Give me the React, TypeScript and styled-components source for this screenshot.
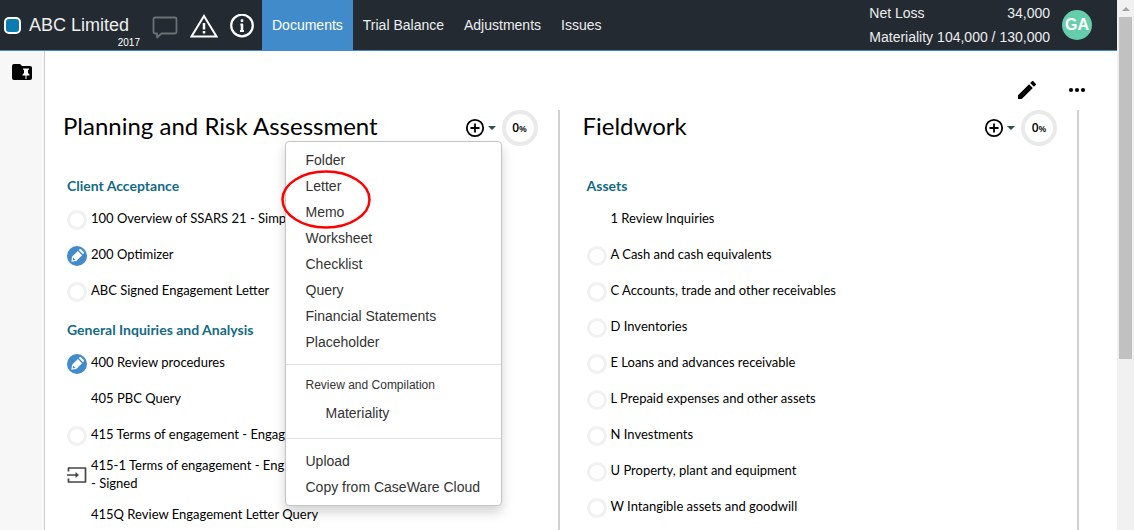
import React from 'react';
import styled, { createGlobalStyle } from 'styled-components';

const GlobalStyle = createGlobalStyle`
  *, *::before, *::after { box-sizing: border-box; }
  body {
    margin: 0;
    background: #fff;
    color: #000;
    font-family: "Liberation Sans", Arial, sans-serif;
    font-size: 14px;
    line-height: 20px;
    overflow: hidden;
  }
  h1, h2, h3, ul, dl, dd, dt, p { margin: 0; padding: 0; }
  ul { list-style: none; }
  a { color: inherit; text-decoration: none; }
  button { font: inherit; color: inherit; background: none; border: 0; padding: 0; cursor: pointer; }
  svg { display: block; }
`;

const Page = styled.div`
  display: flex;
  height: 100vh;
  overflow: hidden;
`;

const Main = styled.div`
  flex: 1;
  min-width: 0;
  display: flex;
  flex-direction: column;
`;

const Header = styled.header`
  display: flex;
  align-items: stretch;
  height: 51px;
  flex-shrink: 0;
  background: #232a32;
  color: #eee;
  border-bottom: 1px solid #428bca;
`;

const Brand = styled.div`
  display: flex;
  align-items: center;
  gap: 8px;
  padding-left: 4px;
`;

const BrandMark = styled.span`
  width: 17px;
  height: 17px;
  border: 2px solid #fff;
  border-radius: 5px;
  background: #0a7cb0;
`;

const BrandText = styled.div`
  display: flex;
  flex-direction: column;
  width: 111px;
  padding-top: 14px;
`;

const BrandName = styled.h1`
  font-size: 18px;
  line-height: 22px;
  font-weight: 400;
  white-space: nowrap;
`;

const BrandYear = styled.span`
  align-self: flex-end;
  font-size: 10px;
  line-height: 14px;
  color: #fff;
`;

const HeaderIcons = styled.div`
  display: flex;
  align-items: center;
  gap: 12px;
  padding: 2px 8px 0 12px;
`;

const HeaderIcon = styled.button`
  display: flex;
`;

const Nav = styled.nav`
  display: flex;
`;

const NavLink = styled.a<{ $active?: boolean }>`
  display: flex;
  align-items: center;
  padding: 0 10px;
  color: ${(p) => (p.$active ? '#fff' : '#eee')};
  background: ${(p) => (p.$active ? '#428bca' : 'transparent')};
`;

const Totals = styled.dl`
  display: grid;
  grid-template-columns: auto auto;
  align-content: center;
  column-gap: 4px;
  margin-left: auto;
  line-height: 24px;

  dd { text-align: right; }
`;

const Avatar = styled.button`
  align-self: center;
  width: 30px;
  height: 30px;
  margin: 0 25px 0 12px;
  border-radius: 50%;
  background: #66cdaa;
  color: #fff;
  font-size: 16px;
  font-weight: 700;
`;

const Body = styled.div`
  flex: 1;
  min-height: 0;
  display: flex;
`;

const Sidebar = styled.aside`
  width: 45px;
  flex-shrink: 0;
  display: flex;
  flex-direction: column;
  align-items: center;
  padding-top: 13px;
  background: #f7f7f7;
  border-right: 1px solid #ccc;
`;

const Content = styled.main`
  flex: 1;
  min-width: 0;
  display: flex;
  flex-direction: column;
`;

const Toolbar = styled.div`
  display: flex;
  justify-content: flex-end;
  align-items: center;
  gap: 32px;
  height: 59px;
  flex-shrink: 0;
  padding: 18px 31px 0 0;
`;

const Columns = styled.div`
  flex: 1;
  display: grid;
  grid-template-columns: repeat(2, minmax(0, 1fr));
  column-gap: 5px;
  padding-right: 38px;
  font-family: Lato, "Open Sans", sans-serif;
`;

const Column = styled.section`
  border-right: 2px solid #d0d0d0;
`;

const ColumnHead = styled.div`
  display: flex;
  align-items: center;
  height: 36px;
  margin-bottom: 19px;
  padding: 0 20px 0 18px;
`;

const ColumnTitle = styled.h2`
  flex: 1;
  padding-bottom: 4px;
  font-size: 24px;
  line-height: 32px;
  font-weight: 400;
`;

const AddWrap = styled.div`
  position: relative;
`;

const AddButton = styled.button`
  display: flex;
  align-items: center;
  gap: 3px;
  padding-right: 6px;
`;

const Progress = styled.span`
  display: flex;
  align-items: center;
  justify-content: center;
  width: 36px;
  height: 36px;
  border: 4px solid #eaeaea;
  border-radius: 50%;
  font-family: "Open Sans", sans-serif;
  font-size: 12px;
  font-weight: 600;

  small { font-size: 9px; padding-top: 2px; }
`;

const GroupTitle = styled.h3`
  height: 36px;
  padding: 3px 0 0 22px;
  font-size: 14px;
  line-height: 36px;
  font-weight: 700;
  color: #136a85;
`;

const GroupList = styled.ul`
  padding: 0;
`;

const DocRow = styled.li`
  display: flex;
  align-items: center;
  gap: 4px;
  min-height: 36px;
  padding: 3px 0 5px 22px;
  line-height: 18px;
`;

const DocLink = styled.a`
  font-size: 13px;
  white-space: pre-line;
`;

const StatusSlot = styled.span`
  width: 20px;
  height: 20px;
  margin-top: 4px;
`;

const EmptyStatus = styled(StatusSlot)`
  border: 3px solid #f1f1f1;
  border-radius: 50%;
`;

const Menu = styled.div`
  position: absolute;
  z-index: 2;
  top: 23px;
  right: 0;
  width: 217px;
  padding: 5px 0;
  background: #fff;
  border: 1px solid #c4c4c4;
  border-radius: 4px;
  box-shadow: 0 6px 12px rgba(0, 0, 0, 0.18);
  font-family: "Liberation Sans", Arial, sans-serif;
  color: #333;
`;

const MenuItem = styled.button<{ $nested?: boolean }>`
  display: block;
  width: 100%;
  padding: 3px 20px 3px ${(p) => (p.$nested ? 40 : 20)}px;
  text-align: left;
  white-space: nowrap;
`;

const MenuDivider = styled.hr`
  height: 1px;
  margin: 9px 0;
  border: 0;
  background: #e2e2e2;
`;

const MenuHeading = styled.div`
  padding: 0 20px;
  font-size: 12px;
  line-height: 23px;
`;

const MenuGroup = styled.div`
  padding: 3px 0;
`;

const Highlight = styled.svg`
  position: absolute;
  top: 27px;
  left: -5px;
  pointer-events: none;
`;

const ScrollTrack = styled.div`
  width: 17px;
  flex-shrink: 0;
  display: flex;
  flex-direction: column;
  align-items: center;
  background: #f1f1f1;
`;

const ScrollArrow = styled.div`
  display: flex;
  align-items: center;
  height: 17px;
`;

const ScrollThumb = styled.div`
  width: 13px;
  height: 67%;
  max-height: 342px;
  background: #c1c1c1;
`;

const CommentIcon = () => (
  <svg width="26" height="28" viewBox="0 -4 26 28" fill="none" stroke="#6b7075" strokeWidth="1.800" strokeLinejoin="round">
    <path d="M3 1.500h20a1.500 1.500 0 0 1 1.500 1.500v13a1.500 1.500 0 0 1-1.500 1.500H9.500L5 21.500V17.500H3a1.500 1.500 0 0 1-1.500-1.500v-13A1.500 1.500 0 0 1 3 1.500z" />
  </svg>
);

const WarningIcon = () => (
  <svg width="28" height="24" viewBox="0 0 28 24" fill="none" stroke="#fff" strokeWidth="2">
    <path d="M14 2L26.500 22.500H1.500z" />
    <path d="M14 9v6.500M14 17v2.500" strokeWidth="2.500" />
  </svg>
);

const InfoIcon = () => (
  <svg width="24" height="24" viewBox="0 0 24 24" fill="none" stroke="#fff" strokeWidth="2.200">
    <circle cx="12" cy="11.500" r="10.800" />
    <path d="M10.500 10.500h1.500v6.500M12 5.500v2.500M10 17h4" strokeWidth="1.800" />
    <path d="M12 5.500v2.500M12 10v7" strokeWidth="2.500" />
  </svg>
);

const FolderPinIcon = () => (
  <svg width="20" height="16" viewBox="0 0 20 16">
    <path d="M2 0h6l2 2h8a2 2 0 0 1 2 2v10a2 2 0 0 1-2 2H2a2 2 0 0 1-2-2V2a2 2 0 0 1 2-2z" fill="#000" />
    <path d="M11 4.500h6v1.200h-1V9l1.500 1.500v1h-3V15h-1v-3.500h-3v-1L12 9V5.700h-1z" fill="#fff" />
  </svg>
);

const PencilIcon = () => (
  <svg width="18" height="18" viewBox="3 3 18 18" fill="#000">
    <path d="M3 17.250V21h3.750L17.810 9.940l-3.750-3.750L3 17.250zM20.710 7.040a1 1 0 0 0 0-1.410l-2.340-2.340a1 1 0 0 0-1.410 0l-1.830 1.830 3.750 3.750 1.830-1.830z" />
  </svg>
);

const DotsIcon = () => (
  <svg width="18" height="6" viewBox="0 0 18 6" fill="#000">
    <circle cx="3" cy="3" r="2.100" />
    <circle cx="9" cy="3" r="2.100" />
    <circle cx="15" cy="3" r="2.100" />
  </svg>
);

const PlusIcon = () => (
  <svg width="20" height="20" viewBox="0 0 20 20" fill="none" stroke="#000" strokeWidth="1.800">
    <circle cx="10" cy="10" r="8.200" />
    <path d="M10 5.500v9M5.500 10h9" />
  </svg>
);

const CaretIcon = () => (
  <svg width="8" height="4" viewBox="0 0 8 4" fill="#2f4f4f">
    <path d="M0 0h8L4 4z" />
  </svg>
);

const EditedIcon = () => (
  <svg width="20" height="20" viewBox="0 0 20 20">
    <circle cx="10" cy="10" r="10" fill="#428bca" />
    <g transform="rotate(45 10 10)">
      <path d="M8 2.500h4a1 1 0 0 1 1 1V4.500H7V3.500a1 1 0 0 1 1-1zM7 5.800h6V14l-3 4-3-4z" fill="#fff" />
      <path d="M8.300 13.800h3.400L10 16z" fill="#428bca" />
    </g>
  </svg>
);

const ImportIcon = () => (
  <svg width="20" height="18" viewBox="0 0 20 18" fill="none" stroke="#444" strokeWidth="1.700" strokeLinejoin="round">
    <path d="M1.500 5.500V2h17v14h-17v-3.500M0 9h10" />
    <path d="M8.500 6l3.500 3-3.500 3z" fill="#444" stroke="none" />
  </svg>
);

type Status = 'empty' | 'edited' | 'import' | 'none';
type Doc = { name: string; status: Status };
type Group = { title: string; docs: Doc[] };

const planning: Group[] = [
  {
    title: 'Client Acceptance',
    docs: [
      { name: '100 Overview of SSARS 21 - Simp', status: 'empty' },
      { name: '200 Optimizer', status: 'edited' },
      { name: 'ABC Signed Engagement Letter', status: 'empty' },
    ],
  },
  {
    title: 'General Inquiries and Analysis',
    docs: [
      { name: '400 Review procedures', status: 'edited' },
      { name: '405 PBC Query', status: 'none' },
      { name: '415 Terms of engagement - Engag', status: 'empty' },
      { name: '415-1 Terms of engagement - Eng\n- Signed', status: 'import' },
      { name: '415Q Review Engagement Letter Query', status: 'none' },
    ],
  },
];

const fieldwork: Group[] = [
  {
    title: 'Assets',
    docs: [
      { name: '1 Review Inquiries', status: 'none' },
      { name: 'A Cash and cash equivalents', status: 'empty' },
      { name: 'C Accounts, trade and other receivables', status: 'empty' },
      { name: 'D Inventories', status: 'empty' },
      { name: 'E Loans and advances receivable', status: 'empty' },
      { name: 'L Prepaid expenses and other assets', status: 'empty' },
      { name: 'N Investments', status: 'empty' },
      { name: 'U Property, plant and equipment', status: 'empty' },
      { name: 'W Intangible assets and goodwill', status: 'empty' },
    ],
  },
];

const documentTypes = ['Folder', 'Letter', 'Memo', 'Worksheet', 'Checklist', 'Query', 'Financial Statements', 'Placeholder'];

const StatusMark = ({ status }: { status: Status }) => {
  if (status === 'empty') return <EmptyStatus />;
  if (status === 'edited') return <StatusSlot><EditedIcon /></StatusSlot>;
  if (status === 'import') return <StatusSlot><ImportIcon /></StatusSlot>;
  return <StatusSlot />;
};

const AddMenu = () => (
  <Menu>
    {documentTypes.map((t) => <MenuItem key={t} type="button">{t}</MenuItem>)}
    <MenuDivider />
    <MenuHeading>Review and Compilation</MenuHeading>
    <MenuGroup>
      <MenuItem type="button" $nested>Materiality</MenuItem>
    </MenuGroup>
    <MenuDivider />
    <MenuItem type="button">Upload</MenuItem>
    <MenuItem type="button">Copy from CaseWare Cloud</MenuItem>
    <Highlight width="90" height="60" viewBox="0 0 90 60" fill="none" stroke="#f00" strokeWidth="2.500">
      <ellipse cx="45" cy="30.500" rx="43.500" ry="28" />
    </Highlight>
  </Menu>
);

const Phase = ({ title, groups, menuOpen }: { title: string; groups: Group[]; menuOpen?: boolean }) => (
  <Column>
    <ColumnHead>
      <ColumnTitle>{title}</ColumnTitle>
      <AddWrap>
        <AddButton type="button" aria-label={`Add to ${title}`}>
          <PlusIcon />
          <CaretIcon />
        </AddButton>
        {menuOpen && <AddMenu />}
      </AddWrap>
      <Progress>0<small>%</small></Progress>
    </ColumnHead>
    {groups.map((g) => (
      <React.Fragment key={g.title}>
        <GroupTitle>{g.title}</GroupTitle>
        <GroupList>
          {g.docs.map((d) => (
            <DocRow key={d.name}>
              <StatusMark status={d.status} />
              <DocLink href="#">{d.name}</DocLink>
            </DocRow>
          ))}
        </GroupList>
      </React.Fragment>
    ))}
  </Column>
);

export default function App() {
  return (
    <Page>
      <GlobalStyle />
      <Main>
        <Header>
          <Brand>
            <BrandMark />
            <BrandText>
              <BrandName>ABC Limited</BrandName>
              <BrandYear>2017</BrandYear>
            </BrandText>
          </Brand>
          <HeaderIcons>
            <HeaderIcon type="button" aria-label="Comments"><CommentIcon /></HeaderIcon>
            <HeaderIcon type="button" aria-label="Warnings"><WarningIcon /></HeaderIcon>
            <HeaderIcon type="button" aria-label="Information"><InfoIcon /></HeaderIcon>
          </HeaderIcons>
          <Nav>
            <NavLink href="#" $active>Documents</NavLink>
            <NavLink href="#">Trial Balance</NavLink>
            <NavLink href="#">Adjustments</NavLink>
            <NavLink href="#">Issues</NavLink>
          </Nav>
          <Totals>
            <dt>Net Loss</dt>
            <dd>34,000</dd>
            <dt>Materiality</dt>
            <dd>104,000 / 130,000</dd>
          </Totals>
          <Avatar type="button">GA</Avatar>
        </Header>
        <Body>
          <Sidebar>
            <button type="button" aria-label="Pinned folders"><FolderPinIcon /></button>
          </Sidebar>
          <Content>
            <Toolbar>
              <button type="button" aria-label="Edit"><PencilIcon /></button>
              <button type="button" aria-label="More"><DotsIcon /></button>
            </Toolbar>
            <Columns>
              <Phase title="Planning and Risk Assessment" groups={planning} menuOpen />
              <Phase title="Fieldwork" groups={fieldwork} />
            </Columns>
          </Content>
        </Body>
      </Main>
      <ScrollTrack>
        <ScrollArrow>
          <svg width="8" height="4" viewBox="0 0 8 4" fill="#a3a3a3"><path d="M4 0l4 4H0z" /></svg>
        </ScrollArrow>
        <ScrollThumb />
      </ScrollTrack>
    </Page>
  );
}
